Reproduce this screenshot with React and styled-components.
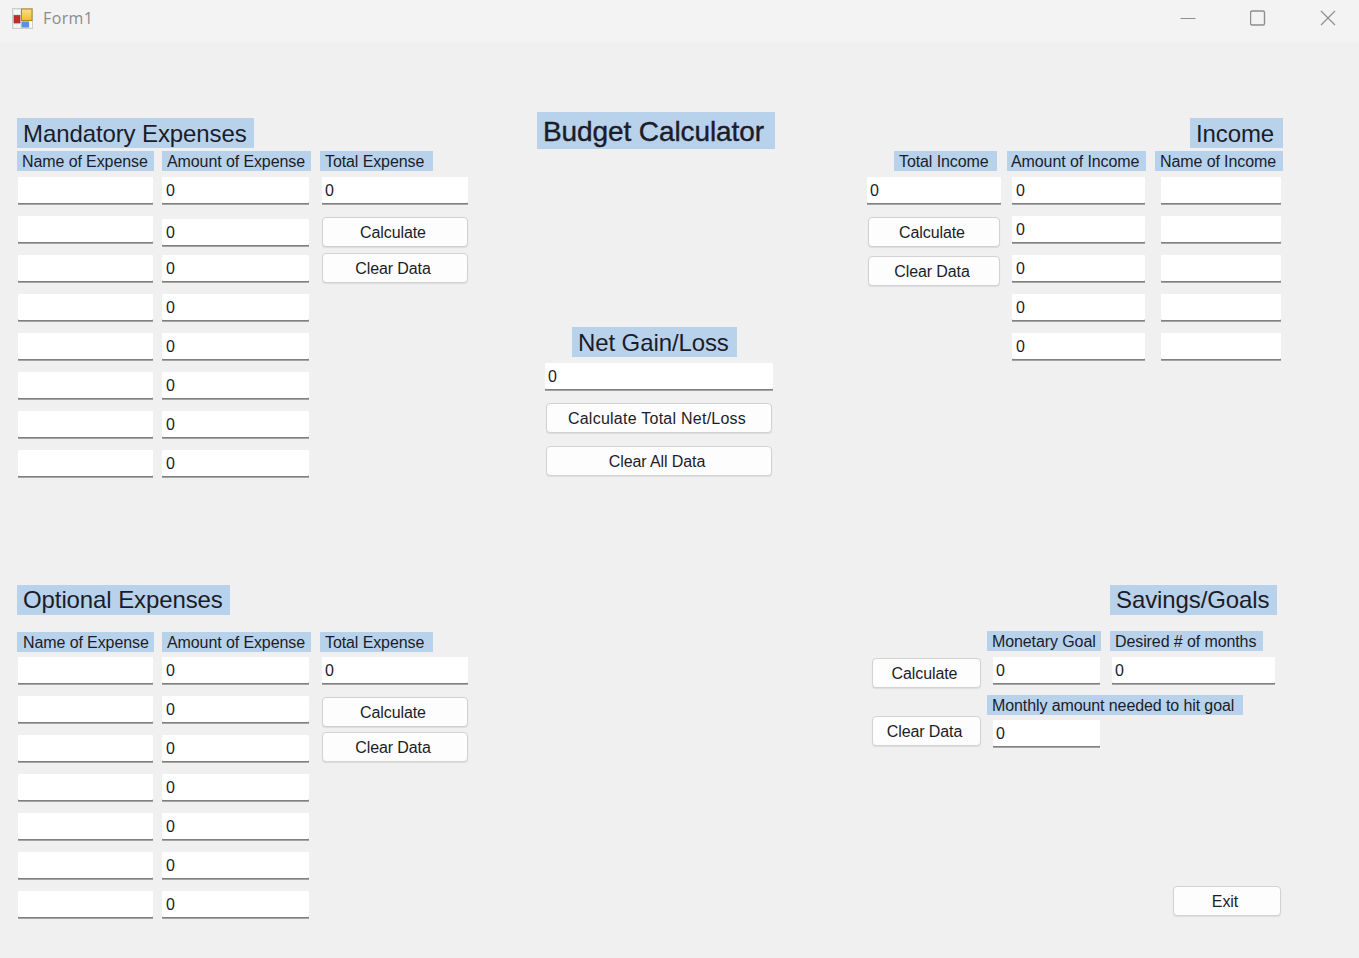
import React from 'react';
import styled, { createGlobalStyle } from 'styled-components';

const GlobalStyle = createGlobalStyle`
  html, body {
    margin: 0;
    padding: 0;
    background: #f0f0f0;
  }
  body {
    font-family: "Liberation Sans", Arial, sans-serif;
    color: #1c1c28;
  }
`;

const Window = styled.div`
  width: 1359px;
  height: 958px;
  display: flex;
  flex-direction: column;
  overflow: hidden;
`;

const TitleBar = styled.div`
  height: 42px;
  flex: none;
  display: flex;
  align-items: center;
  padding-left: 12px;
  background: #f3f3f3;
`;

const WindowTitle = styled.span`
  margin-left: 10px;
  font-family: "Open Sans", sans-serif;
  font-size: 16px;
  letter-spacing: 0.4px;
  color: #8b8b8b;
  flex: 1;
  margin-top: -6px;
`;

const AppIcon = styled.svg`
  margin-top: -6px;
`;

const WindowButton = styled.div`
  width: 70px;
  height: 38px;
  display: flex;
  align-items: center;
  justify-content: center;
  color: #8e8e8e;
  margin-top: -7px;
`;

const WindowButtons = styled.div`
  display: flex;
  margin-right: -4px;
`;

const Form = styled.div`
  flex: 1;
  min-height: 0;
  display: grid;
  grid-template-columns: 520px 330px 1fr;
  grid-template-rows: 473px minmax(0, 1fr);
  padding: 70px 0 42px 17px;
`;

const Heading = styled.div`
  height: 30px;
  line-height: ${(p) => p.$line || 31}px;
  padding: 0 6px;
  font-size: 24px;
  letter-spacing: -0.1px;
  background: #b9d2ec;
  white-space: nowrap;
  box-sizing: border-box;
  width: ${(p) => p.$width}px;
  align-self: ${(p) => p.$self || 'flex-start'};
  margin: ${(p) => p.$top || 0}px ${(p) => p.$right || 0}px 0 ${(p) => p.$left || 0}px;
`;

const Label = styled.div`
  height: 20px;
  line-height: 21px;
  font-size: 16px;
  letter-spacing: -0.1px;
  background: #b9d2ec;
  white-space: nowrap;
  box-sizing: border-box;
  width: ${(p) => p.$width}px;
  margin: ${(p) => p.$top || 0}px 0 0 ${(p) => p.$left || 0}px;
  padding-left: ${(p) => p.$pad ?? 5}px;
`;

const Field = styled.input`
  display: block;
  flex: none;
  box-sizing: border-box;
  width: ${(p) => p.$width}px;
  height: 28px;
  margin: ${(p) => p.$top || 0}px 0 0 ${(p) => p.$left || 0}px;
  padding: 0 0 0 ${(p) => p.$pad ?? 3}px;
  border: 0;
  border-radius: 1px;
  outline: none;
  background: #ffffff;
  box-shadow: inset 0 -1px #a4a4a4, inset 0 -2px #808080;
  font-family: "Liberation Sans", Arial, sans-serif;
  font-size: 16px;
  color: #1c1c28;
`;

const Button = styled.button`
  display: block;
  flex: none;
  box-sizing: border-box;
  width: ${(p) => p.$width}px;
  height: 30px;
  margin: ${(p) => p.$top || 0}px 0 0 ${(p) => p.$left || 0}px;
  padding: 2px 4px 0 0;
  border: 1px solid #d2d2d2;
  border-radius: 4px;
  background: #fdfdfd;
  box-shadow: 0 1px 1px #dcdcdc;
  font-family: "Liberation Sans", Arial, sans-serif;
  font-size: 16px;
  letter-spacing: ${(p) => p.$spacing ?? -0.1}px;
  color: #1c1c28;
`;

const Section = styled.section`
  display: flex;
  flex-direction: column;
  min-height: 0;
  padding-top: ${(p) => p.$top || 0}px;
`;

const Columns = styled.div`
  display: grid;
  grid-template-columns: ${(p) => p.$columns};
  margin-top: ${(p) => p.$top || 3}px;
`;

const Column = styled.div`
  display: flex;
  flex-direction: column;
`;

const CenterTitle = styled.div`
  width: 238px;
  height: 37px;
  line-height: 39px;
  box-sizing: border-box;
  padding-left: 6px;
  background: #b9d2ec;
  font-size: 28px;
  letter-spacing: -0.1px;
  -webkit-text-stroke: 0.4px #1c1c28;
  white-space: nowrap;
`;

const CenterColumn = styled.section`
  display: flex;
  flex-direction: column;
`;

const SavingsGrid = styled.div`
  display: grid;
  grid-template-columns: 120px 123px 1fr;
  margin-top: 16px;
`;

const ExitButton = styled(Button)`
  margin-top: auto;
  align-self: flex-end;
  margin-right: 78px;
`;

const FormIcon = () => (
  <AppIcon width="21" height="21" viewBox="0 0 21 21">
    <defs>
      <linearGradient id="tile" x1="0" y1="0" x2="0" y2="1">
        <stop offset="0" stopColor="#fbe08a" />
        <stop offset="1" stopColor="#f0bd2e" />
      </linearGradient>
    </defs>
    <rect x="0.5" y="0.5" width="20" height="20" fill="#e6e6e6" stroke="#cdcdcd" />
    <rect x="2" y="2" width="6" height="4" fill="#f8f8f8" />
    <rect x="2" y="7.5" width="6" height="7.5" fill="#c22f29" stroke="#9a2621" strokeWidth="0.6" />
    <rect x="2" y="16.5" width="2.5" height="3" fill="#f8f8f8" />
    <rect x="5.5" y="16.5" width="2.5" height="3" fill="#f8f8f8" />
    <rect x="9.5" y="1" width="10.5" height="11.5" fill="url(#tile)" stroke="#b08a18" />
    <rect x="9.5" y="13.5" width="7.5" height="6" fill="#5c90e2" />
    <rect x="17.5" y="13.5" width="2.5" height="6" fill="#f8f8f8" />
  </AppIcon>
);

const textRows = (count) => Array.from({ length: count });

// amountTops: gap above each amount box, the mandatory one is a bit uneven
function ExpenseColumns({ rows, labelPad, top, firstTop, amountTops, actionTops }) {
  return (
    <Columns $columns="145px 158px 150px" $top={top}>
      <Column>
        <Label $width={137} $pad={labelPad}>Name of Expense</Label>
        {textRows(rows).map((_, i) => (
          <Field key={i} readOnly $width={135} $left={1} $top={i === 0 ? firstTop : 11} />
        ))}
      </Column>
      <Column>
        <Label $width={149}>Amount of Expense</Label>
        {textRows(rows).map((_, i) => (
          <Field key={i} readOnly value="0" $width={147} $pad={4} $top={amountTops[i] ?? 11} />
        ))}
      </Column>
      <Column>
        <Label $width={113}>Total Expense</Label>
        <Field readOnly value="0" $width={146} $left={2} $top={firstTop} />
        <Button $width={146} $left={2} $top={actionTops[0]}>Calculate</Button>
        <Button $width={146} $left={2} $top={actionTops[1]}>Clear Data</Button>
      </Column>
    </Columns>
  );
}

export default function App() {
  return (
    <Window>
      <GlobalStyle />
      <TitleBar>
        <FormIcon />
        <WindowTitle>Form1</WindowTitle>
        <WindowButtons>
          <WindowButton>
            <svg width="16" height="16" viewBox="0 0 16 16">
              <path d="M0.5 8.5h15" stroke="currentColor" fill="none" />
            </svg>
          </WindowButton>
          <WindowButton>
            <svg width="16" height="16" viewBox="0 0 16 16">
              <rect x="0.5" y="1" width="14" height="14" rx="1.5" stroke="currentColor" strokeWidth="1.4" fill="none" />
            </svg>
          </WindowButton>
          <WindowButton>
            <svg width="16" height="16" viewBox="0 0 16 16">
              <path d="M1 1l14 14M15 1L1 15" stroke="currentColor" strokeWidth="1.2" fill="none" />
            </svg>
          </WindowButton>
        </WindowButtons>
      </TitleBar>

      <Form>
        <Section $top={6}>
          <Heading $width={237}>Mandatory Expenses</Heading>
          <ExpenseColumns
            rows={8}
            labelPad={5}
            top={3}
            firstTop={6}
            amountTops={[6, 14, 8]}
            actionTops={[12, 6]}
          />
        </Section>

        <CenterColumn>
          <CenterTitle>Budget Calculator</CenterTitle>
          <Heading $width={165} $top={178} $left={35}>Net Gain/Loss</Heading>
          <Field readOnly value="0" $width={228} $left={8} $top={6} />
          <Button $width={226} $left={9} $top={12} $spacing={0.25}>Calculate Total Net/Loss</Button>
          <Button $width={226} $left={9} $top={13}>Clear All Data</Button>
        </CenterColumn>

        <Section $top={6}>
          <Heading $width={93} $self="flex-end" $right={76}>Income</Heading>
          <Columns $columns="140px 149px 1fr" $top={3}>
            <Column>
              <Label $width={103} $left={27} $pad={5}>Total Income</Label>
              <Field readOnly value="0" $width={134} $top={6} />
              <Button $width={132} $left={1} $top={12}>Calculate</Button>
              <Button $width={132} $left={1} $top={9}>Clear Data</Button>
            </Column>
            <Column>
              <Label $width={139} $pad={4}>Amount of Income</Label>
              {textRows(5).map((_, i) => (
                <Field key={i} readOnly value="0" $width={133} $left={5} $pad={4} $top={i === 0 ? 6 : 11} />
              ))}
            </Column>
            <Column>
              <Label $width={128} $left={-1} $pad={5}>Name of Income</Label>
              {textRows(5).map((_, i) => (
                <Field key={i} readOnly $width={120} $left={5} $top={i === 0 ? 6 : 11} />
              ))}
            </Column>
          </Columns>
        </Section>

        <Section>
          <Heading $width={213} $line={30}>Optional Expenses</Heading>
          <ExpenseColumns
            rows={7}
            labelPad={6}
            top={17}
            firstTop={5}
            amountTops={[5]}
            actionTops={[12, 5]}
          />
        </Section>

        <div />

        <Section>
          <Heading $width={167} $line={30} $self="flex-end" $right={82}>Savings/Goals</Heading>
          <SavingsGrid>
            <Column>
              <Button $width={109} $left={5} $top={27}>Calculate</Button>
              <Button $width={109} $left={5} $top={28}>Clear Data</Button>
            </Column>
            <Column>
              <Label $width={114}>Monetary Goal</Label>
              <Field readOnly value="0" $width={107} $left={6} $top={6} />
              <Label $width={256} $top={10}>Monthly amount needed to hit goal</Label>
              <Field readOnly value="0" $width={107} $left={6} $top={5} />
            </Column>
            <Column>
              <Label $width={153}>Desired # of months</Label>
              <Field readOnly value="0" $width={163} $left={2} $top={6} />
            </Column>
          </SavingsGrid>
          <ExitButton $width={108}>Exit</ExitButton>
        </Section>
      </Form>
    </Window>
  );
}
